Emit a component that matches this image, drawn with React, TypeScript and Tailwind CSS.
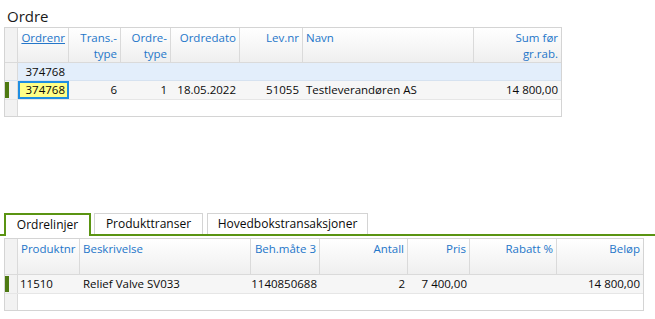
import React from "react";

const font = { fontFamily: '"Open Sans", "Noto Sans", sans-serif' };

function Hdr({ w, children, align = "right", underline = false, last = false }: { w: string; children?: React.ReactNode; align?: "left" | "right"; underline?: boolean; last?: boolean }) {
  return (
    <div
      className={`${w} h-full shrink-0 ${last ? "" : "border-r border-[#dadada]"} px-[3px] pt-[2px] text-[#2476c9] leading-[16px] ${align === "right" ? "text-right" : "text-left"}`}
    >
      <span className={underline ? "underline" : ""}>{children}</span>
    </div>
  );
}

export default function App() {
  return (
    <div className="w-[655px] h-[319px] bg-white text-[11.5px] text-[#0a0a0a] relative overflow-hidden" style={font}>
      <div className="pl-[7px] pt-[6px] h-[27px] text-[15px] leading-[20px] text-[#1a1a1a]">Ordre</div>

      {/* Top grid */}
      <div className="ml-[4px] w-[558px] border border-[#d4d4d4]">
        <div className="flex h-[35px] border-b border-[#dadada] bg-gradient-to-b from-white to-[#efefef]">
          <div className="w-[13px] shrink-0 border-r border-[#dadada] bg-[#f2f2f2]" />
          <Hdr w="w-[51px]" underline>Ordrenr</Hdr>
          <Hdr w="w-[52px]">Trans.-<br />type</Hdr>
          <Hdr w="w-[50px]">Ordre-<br />type</Hdr>
          <Hdr w="w-[69px]">Ordredato</Hdr>
          <Hdr w="w-[63px]">Lev.nr</Hdr>
          <Hdr w="w-[171px]" align="left">Navn</Hdr>
          <Hdr w="w-[87px]" last>Sum før<br />gr.rab.</Hdr>
        </div>
        <div className="flex h-[18px] border-b border-[#d6e2f0] bg-[#e3eefb] leading-[17px]">
          <div className="w-[13px] shrink-0 border-r border-[#dadada] bg-[#f2f2f2]" />
          <div className="w-[51px] shrink-0 text-right pr-[4px]">374768</div>
        </div>
        <div className="flex h-[18px] bg-[#f6f6f6] leading-[17px]">
          <div className="w-[13px] shrink-0 border-r border-[#dadada] bg-[#f2f2f2] flex items-stretch py-[1px]">
            <div className="w-[4px] bg-[#4e7a12]" />
          </div>
          <div className="w-[51px] shrink-0 text-right pr-[2px] bg-[#ffff86] border-2 border-[#1e8ee2] leading-[14px]">374768</div>
          <div className="w-[52px] shrink-0 text-right pr-[4px]">6</div>
          <div className="w-[50px] shrink-0 text-right pr-[4px]">1</div>
          <div className="w-[69px] shrink-0 text-right pr-[4px]">18.05.2022</div>
          <div className="w-[63px] shrink-0 text-right pr-[4px]">51055</div>
          <div className="w-[171px] shrink-0 pl-[3px]">Testleverandøren AS</div>
          <div className="w-[87px] shrink-0 text-right pr-[3px]">14 800,00</div>
        </div>
        <div className="flex h-[17px] border-t border-[#e6e6e6]">
          <div className="w-[13px] shrink-0 border-r border-[#dadada] bg-[#f2f2f2]" />
        </div>
      </div>

      {/* Tabs */}
      <div className="mt-[95px] relative h-[24px]">
        <div className="absolute left-0 right-0 bottom-0 h-[2px] bg-[#5a9412]" />
        <div className="flex items-end h-full">
          <div className="ml-[4px] w-[87px] h-[23px] border-2 border-b-0 border-[#5a9412] bg-white text-center leading-[20px] relative z-10 text-[12px]">
            Ordrelinjer
          </div>
          <div className="ml-[3px] w-[109px] h-[21px] mb-[2px] border border-b-0 border-[#d4d4d4] text-center leading-[20px] text-[12px]">
            Produkttranser
          </div>
          <div className="ml-[4px] w-[161px] h-[21px] mb-[2px] border border-b-0 border-[#d4d4d4] text-center leading-[20px] text-[12px]">
            Hovedbokstransaksjoner
          </div>
        </div>
      </div>

      {/* Bottom grid */}
      <div className="mt-[2px] ml-[4px] w-[640px] border border-[#d4d4d4]">
        <div className="flex h-[36px] border-b border-[#dadada] bg-gradient-to-b from-white to-[#efefef]">
          <div className="w-[13px] shrink-0 border-r border-[#dadada] bg-[#f2f2f2]" />
          <Hdr w="w-[62px]" align="left">Produktnr</Hdr>
          <Hdr w="w-[171px]" align="left">Beskrivelse</Hdr>
          <Hdr w="w-[69px]">Beh.måte 3</Hdr>
          <Hdr w="w-[88px]">Antall</Hdr>
          <Hdr w="w-[62px]">Pris</Hdr>
          <Hdr w="w-[87px]">Rabatt %</Hdr>
          <Hdr w="w-[86px]" last>Beløp</Hdr>
        </div>
        <div className="flex h-[18px] bg-[#f6f6f6] leading-[17px]">
          <div className="w-[13px] shrink-0 border-r border-[#dadada] bg-[#f2f2f2] flex items-stretch py-[1px]">
            <div className="w-[4px] bg-[#4e7a12]" />
          </div>
          <div className="w-[62px] shrink-0 pl-[2px]">11510</div>
          <div className="w-[171px] shrink-0 pl-[3px]">Relief Valve SV033</div>
          <div className="w-[69px] shrink-0 text-right pr-[3px]">1140850688</div>
          <div className="w-[88px] shrink-0 text-right pr-[3px]">2</div>
          <div className="w-[62px] shrink-0 text-right pr-[3px]">7 400,00</div>
          <div className="w-[87px] shrink-0" />
          <div className="w-[86px] shrink-0 text-right pr-[3px]">14 800,00</div>
        </div>
        <div className="flex h-[17px] border-t border-[#e6e6e6]">
          <div className="w-[13px] shrink-0 border-r border-[#dadada] bg-[#f2f2f2]" />
        </div>
      </div>
    </div>
  );
}
